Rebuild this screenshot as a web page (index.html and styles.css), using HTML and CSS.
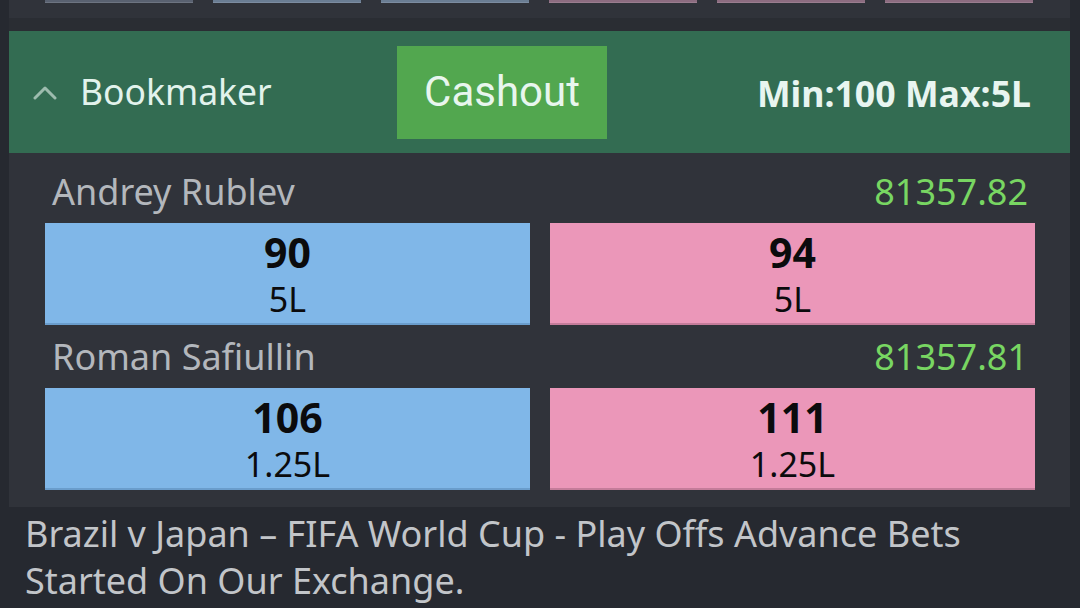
FILE: index.html
```html
<!DOCTYPE html>
<html lang="en">
<head>
<meta charset="utf-8">
<title>Bookmaker</title>
<link rel="stylesheet" href="styles.css">
</head>
<body>
<div class="prev-market">
  <div class="prev-tiles">
    <span class="tile tile-gray"></span>
    <span class="tile tile-blue"></span>
    <span class="tile tile-blue"></span>
    <span class="tile tile-pink"></span>
    <span class="tile tile-pink"></span>
    <span class="tile tile-pink"></span>
  </div>
</div>
<div class="divider"></div>
<section class="market">
  <header class="market-header">
    <div class="title">
      <svg class="chevron" viewBox="0 0 24 16" width="24" height="16"><polyline points="2,14 12,4 22,14" fill="none" stroke="#9dbcae" stroke-width="3" stroke-linecap="round" stroke-linejoin="round"/></svg>
      <span class="title-text">Bookmaker</span>
    </div>
    <button class="cashout">Cashout</button>
    <div class="limits">Min:100 Max:5L</div>
  </header>
  <div class="runners">
    <div class="runner">
      <div class="runner-head">
        <span class="runner-name">Andrey Rublev</span>
        <span class="runner-pl">81357.82</span>
      </div>
      <div class="odds-row">
        <div class="odd back"><span class="price">90</span><span class="size">5L</span></div>
        <div class="odd lay"><span class="price">94</span><span class="size">5L</span></div>
      </div>
    </div>
    <div class="runner">
      <div class="runner-head">
        <span class="runner-name">Roman Safiullin</span>
        <span class="runner-pl">81357.81</span>
      </div>
      <div class="odds-row">
        <div class="odd back"><span class="price">106</span><span class="size">1.25L</span></div>
        <div class="odd lay"><span class="price">111</span><span class="size">1.25L</span></div>
      </div>
    </div>
  </div>
</section>
<p class="news">Brazil v Japan – FIFA World Cup - Play Offs Advance Bets Started On Our Exchange.</p>
</body>
</html>
```

FILE: styles.css
```css
* { box-sizing: border-box; }
html, body { margin: 0; padding: 0; }
body {
  width: 1080px;
  height: 608px;
  overflow: hidden;
  background: #262930;
  font-family: "Noto Sans", "Open Sans", sans-serif;
}
.prev-market {
  margin: 0 10px 0 9px;
  height: 18px;
  background: #30333a;
}
.prev-tiles {
  display: flex;
  gap: 20px;
  padding-left: 36px;
}
.tile {
  display: block;
  width: 148px;
  height: 3px;
  border-bottom: 1px solid rgba(255,255,255,0.12);
}
.tile-gray { background: #596170; }
.tile-blue { background: #6a7d93; }
.tile-pink { background: #8c6c80; }
.divider {
  margin: 0 10px 0 9px;
  height: 13px;
  background: #2a2d33;
}
.market {
  margin: 0 10px 0 9px;
  background: #30333a;
}
.market-header {
  display: flex;
  align-items: center;
  height: 122px;
  padding: 0 39px 0 24px;
  background: #336c52;
}
.title {
  display: flex;
  align-items: center;
  gap: 23px;
  width: 364px;
}
.chevron { display: block; }
.title-text {
  font-size: 35.5px;
  color: #e2f3ec;
  line-height: 1;
}
.cashout {
  width: 210px;
  height: 93px;
  border: 0;
  padding: 0;
  background: #52a74f;
  color: #e8f6ee;
  font-family: Roboto, "Noto Sans", sans-serif;
  font-size: 42px;
  line-height: 1;
}
.limits {
  margin-left: auto;
  font-size: 35.7px;
  font-weight: 700;
  color: #e8f5f0;
  line-height: 1;
  padding-top: 4px;
}
.runners {
  padding: 7px 35px 17px 36px;
}
.runner-head {
  display: flex;
  align-items: center;
  justify-content: space-between;
  height: 63px;
  padding: 0 7px;
  font-size: 36px;
  line-height: 1;
}
.runner-name { color: #b3b7bc; }
.runner-pl { color: #78d662; }
.odds-row {
  display: flex;
  gap: 20px;
}
.odd {
  flex: 1;
  height: 102px;
  display: flex;
  flex-direction: column;
  align-items: center;
  padding-top: 6px;
  color: #0b0b0d;
}
.back { background: #80b7e8; border-bottom: 2px solid #6a9dcc; }
.lay { background: #eb97b9; border-bottom: 2px solid #c47c9a; }
.price {
  font-size: 41px;
  font-weight: 700;
  line-height: 46px;
}
.size {
  font-size: 34px;
  line-height: 48px;
}
.news {
  margin: 0;
  padding: 3px 25px 0 25px;
  font-size: 36px;
  line-height: 47px;
  color: #c2c5c9;
}
```
